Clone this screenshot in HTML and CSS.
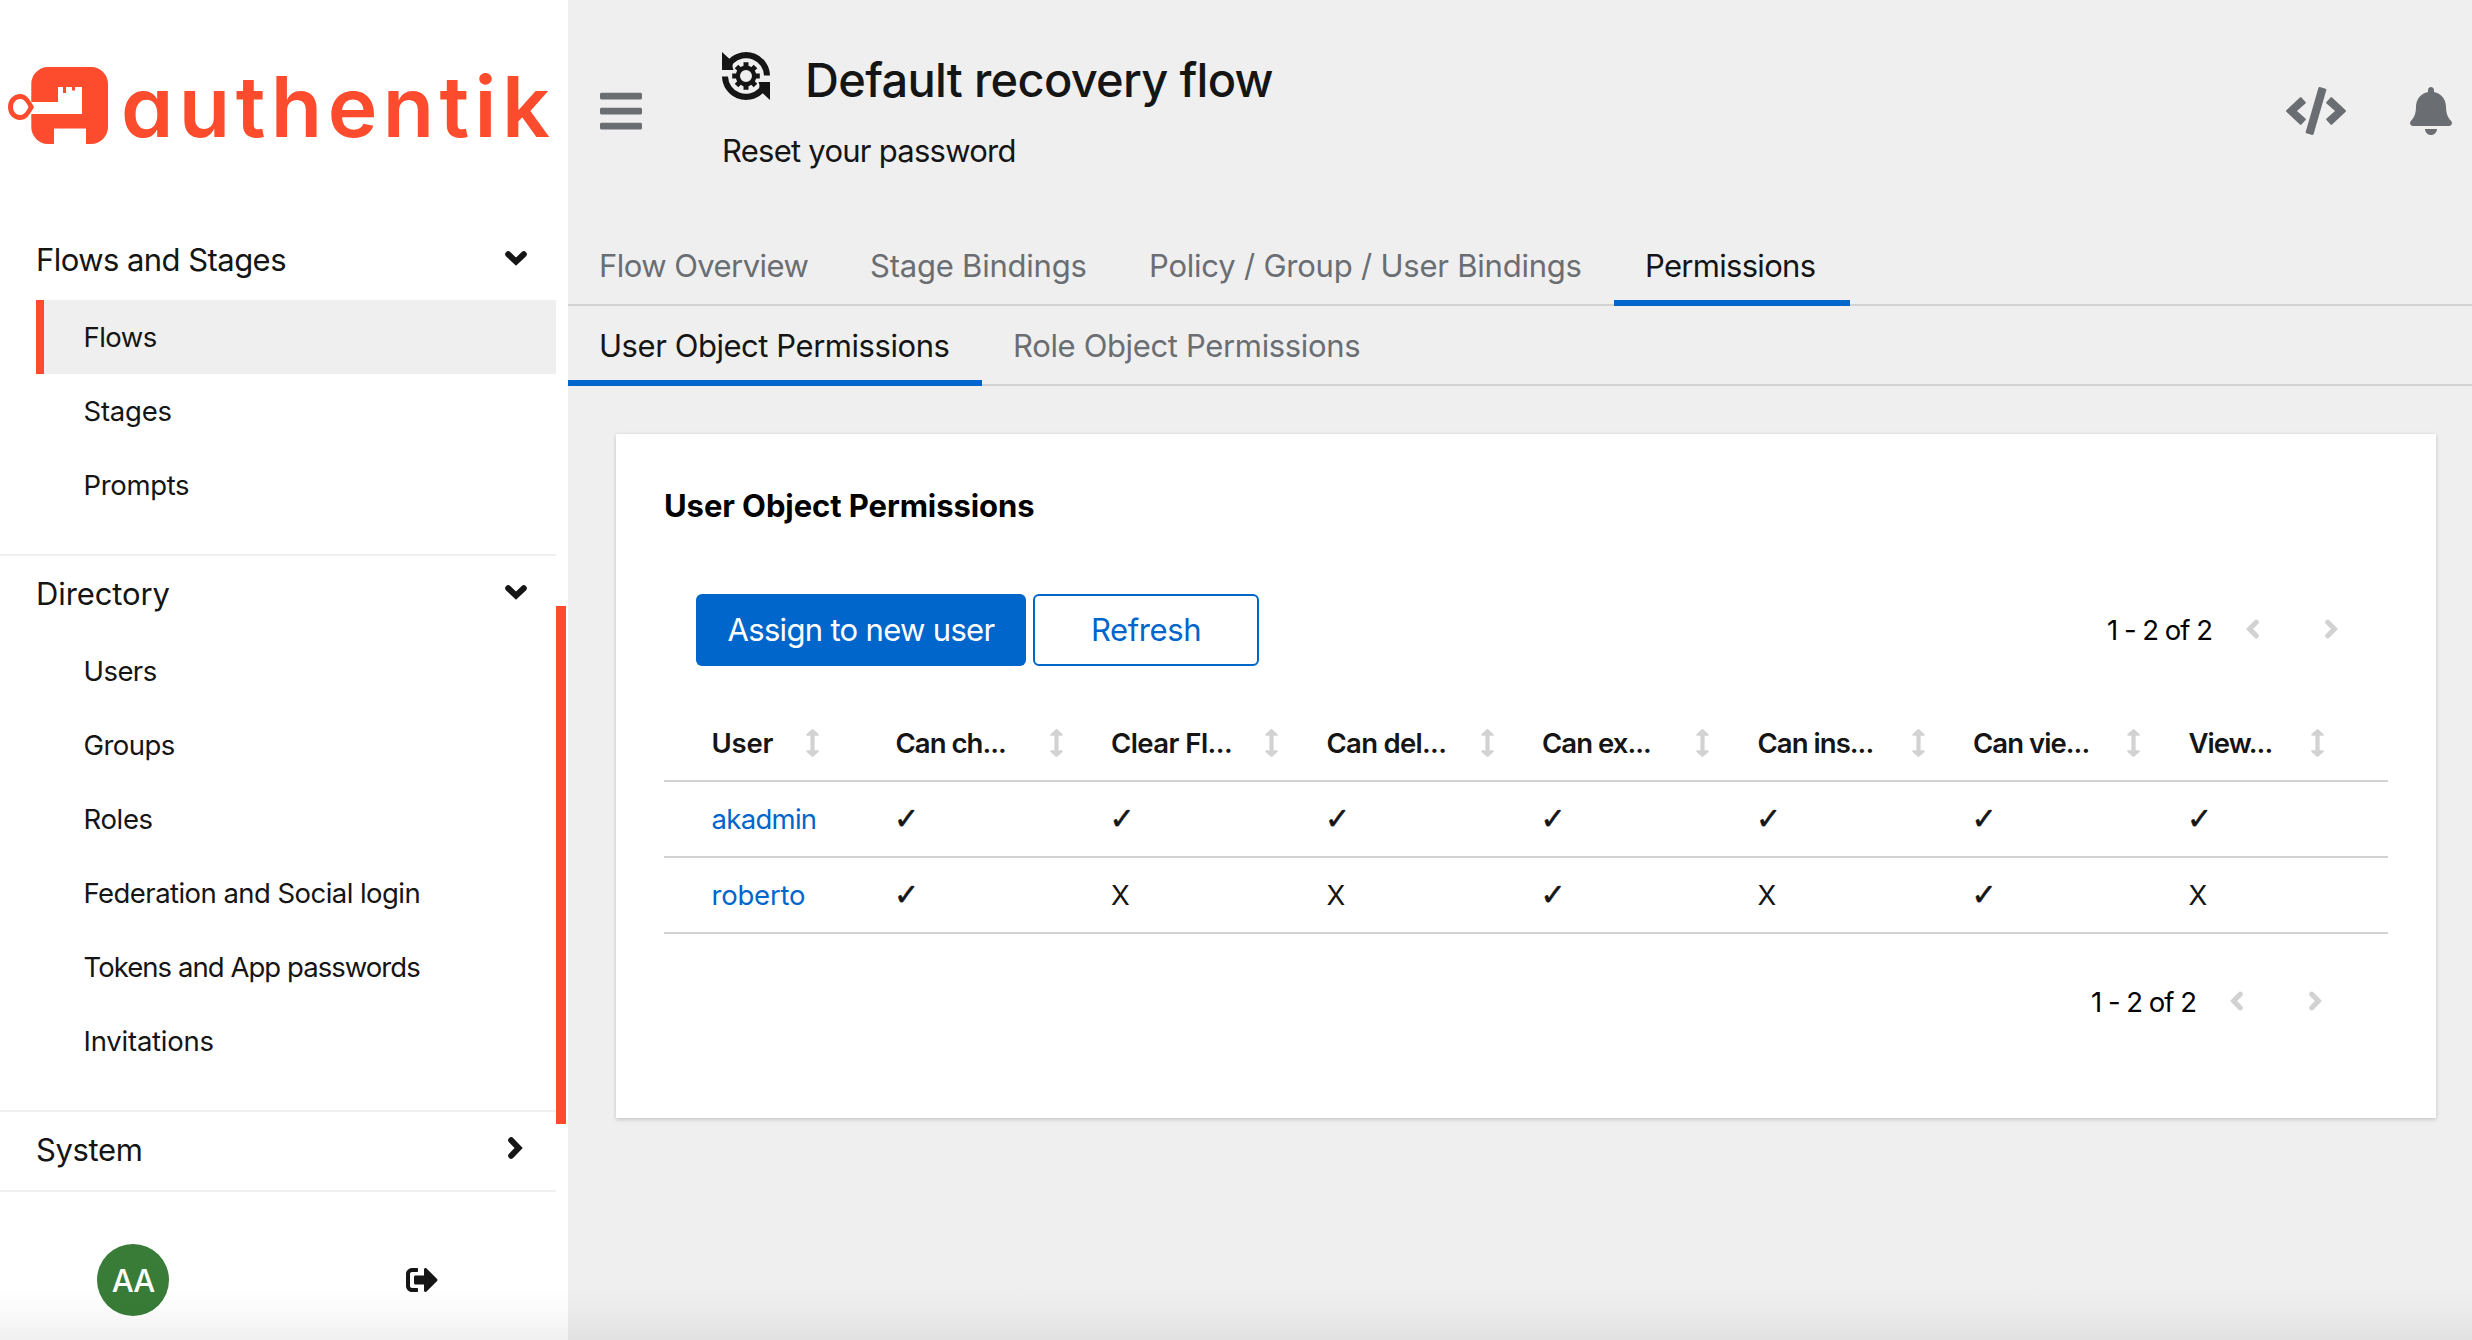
FILE: index.html
```
<!DOCTYPE html>
<html lang="en">
<head>
<meta charset="utf-8">
<title>Default recovery flow - authentik</title>
<link rel="stylesheet" href="styles.css">
</head>
<body>
<svg class="defs" width="0" height="0">
  <symbol id="chev-down" viewBox="0 0 22 15"><path d="M3.200 3.200L11 10.600L18.800 3.200" fill="none" stroke="currentColor" stroke-width="6" stroke-linecap="round"/></symbol>
  <symbol id="chev-right" viewBox="0 0 15 22"><path d="M3.200 3.200L10.600 11L3.200 18.800" fill="none" stroke="currentColor" stroke-width="6" stroke-linecap="round"/></symbol>
  <symbol id="angle-right" viewBox="0 0 13 20"><path d="M2.800 3.200L9.400 10L2.800 16.800" fill="none" stroke="currentColor" stroke-width="5.200" stroke-linecap="round"/></symbol>
  <symbol id="angle-left" viewBox="0 0 13 20"><path d="M10.200 3.200L3.600 10L10.200 16.800" fill="none" stroke="currentColor" stroke-width="5.200" stroke-linecap="round"/></symbol>
  <symbol id="sort" viewBox="0 0 13 28"><path d="M5.600.4q.9-.7 1.800 0l5 4.600q1 1.600-.6 1.800H8.600v14.400h3.200q1.600.2.600 1.800l-5 4.600q-.9.7-1.800 0l-5-4.600q-1-1.600.6-1.800h3.200V6.800H1.200Q-.4 6.600.6 5z"/></symbol>
</svg>
<div class="page">
  <aside class="sidebar">
    <div class="brand">
      <svg class="brand-mark" width="100" height="77" viewBox="0 0 100 77">
        <path fill="#fd4b2d" fill-rule="evenodd" d="M40 0H83A17 17 0 0 1 100 17V60A17 17 0 0 1 83 77H78V61.500H46V77H40A17 17 0 0 1 23.300 60V47H74V20H67V23.500H64V20H58V26H55V20H50V35H23.300V17A17 17 0 0 1 40 0zM12 27C18 27 21 31 26 40C21 49 18 53 12 53C5.500 53 0 47.500 0 40S5.500 27 12 27zM12.300 32C8.200 32 5 35.500 5 40S8.200 48 12.300 48C15.500 48 18 45.500 20.500 40C18 34.500 15.500 32 12.300 32z"/>
      </svg>
      <span class="brand-name">authentik</span>
    </div>
    <nav class="nav">
      <section class="group">
        <div class="group-head"><span>Flows and Stages</span><svg class="ic" width="22" height="15"><use href="#chev-down"/></svg></div>
        <a class="item current">Flows</a>
        <a class="item t2">Stages</a>
        <a class="item t3">Prompts</a>
      </section>
      <section class="group">
        <div class="group-head t1"><span>Directory</span><svg class="ic" width="22" height="15"><use href="#chev-down"/></svg></div>
        <a class="item">Users</a>
        <a class="item">Groups</a>
        <a class="item t3">Roles</a>
        <a class="item">Federation and Social login</a>
        <a class="item t9">Tokens and App passwords</a>
        <a class="item t2">Invitations</a>
      </section>
      <section class="group closed">
        <div class="group-head t3"><span>System</span><svg class="ic right" width="15" height="22"><use href="#chev-right"/></svg></div>
      </section>
    </nav>
    <div class="user">
      <span class="avatar">AA</span>
      <svg width="32" height="32" viewBox="0 0 512 512"><path d="M497 273L329 441c-15 15-41 4.500-41-17v-96H152c-13.300 0-24-10.700-24-24v-96c0-13.300 10.700-24 24-24h136V88c0-21.400 25.900-32 41-17l168 168c9.300 9.400 9.300 24.600 0 34zM192 436v-40c0-6.600-5.400-12-12-12H96c-17.700 0-32-14.300-32-32V160c0-17.700 14.300-32 32-32h84c6.600 0 12-5.400 12-12V76c0-6.600-5.400-12-12-12H96c-53 0-96 43-96 96v192c0 53 43 96 96 96h84c6.600 0 12-5.400 12-12z"/></svg>
    </div>
    <div class="thumb"></div>
  </aside>
  <main class="main">
    <header class="header">
      <svg class="menu" width="42" height="48" viewBox="0 0 448 512"><path d="M16 132h416c8.837 0 16-7.163 16-16V76c0-8.837-7.163-16-16-16H16C7.163 60 0 67.163 0 76v40c0 8.837 7.163 16 16 16zm0 160h416c8.837 0 16-7.163 16-16v-40c0-8.837-7.163-16-16-16H16c-8.837 0-16 7.163-16 16v40c0 8.837 7.163 16 16 16zm0 160h416c8.837 0 16-7.163 16-16v-40c0-8.837-7.163-16-16-16H16c-8.837 0-16 7.163-16 16v40c0 8.837 7.163 16 16 16z"/></svg>
      <div class="heading">
        <div class="title-row">
          <svg class="flow-icon" width="48" height="48" viewBox="0 0 48 48">
            <g id="cycle"><path d="M0 0L7.300 6.800A24 24 0 0 1 48 23.500H42A18 18 0 0 0 11.500 11.200Q9.500 13.500 11.500 18H0z"/></g>
            <use href="#cycle" transform="rotate(180 24 24)"/>
            <circle cx="24" cy="24" r="8.200" fill="none" stroke="#151515" stroke-width="4.400"/>
            <path d="M24 10.200V15M24 33V37.800M10.200 24H15M33 24H37.800M14.500 14.500L17.800 17.800M30.200 30.200L33.500 33.500M14.500 33.500L17.800 30.200M30.200 17.800L33.500 14.500" stroke="#151515" stroke-width="5"/>
          </svg>
          <h1>Default recovery flow</h1>
        </div>
        <p class="subtitle">Reset your password</p>
      </div>
      <div class="tools">
        <svg width="60" height="48" viewBox="0 0 640 512"><path d="M278.900 511.500l-61-17.700c-6.400-1.800-10-8.500-8.200-14.900L346.200 8.700c1.800-6.400 8.500-10 14.900-8.200l61 17.700c6.400 1.800 10 8.500 8.200 14.900L293.800 503.300c-1.900 6.400-8.500 10.100-14.900 8.200zm-114-112.200l43.500-46.400c4.600-4.900 4.300-12.700-.8-17.200L117 256l90.600-79.700c5.100-4.500 5.500-12.300.8-17.200l-43.500-46.400c-4.500-4.800-12.100-5.100-17-.5L3.800 247.200c-5.100 4.700-5.100 12.800 0 17.500l144.100 135.100c4.900 4.600 12.500 4.400 17-.5zm327.200.6l144.100-135.100c5.100-4.700 5.100-12.800 0-17.500L492.100 112.100c-4.800-4.500-12.400-4.300-17 .5L431.600 159c-4.600 4.900-4.300 12.700.8 17.200L523 256l-90.600 79.700c-5.100 4.500-5.500 12.300-.8 17.200l43.500 46.400c4.500 4.900 12.100 5.100 17 .6z"/></svg>
        <svg width="42" height="48" viewBox="0 0 448 512"><path d="M224 512c35.320 0 63.970-28.650 63.970-64H160.030c0 35.350 28.650 64 63.970 64zm215.390-149.710c-19.320-20.760-55.470-51.990-55.470-154.290 0-77.700-54.480-139.900-127.940-155.160V32c0-17.670-14.320-32-31.980-32s-31.980 14.330-31.980 32v20.840C118.560 68.100 64.080 130.300 64.080 208c0 102.300-36.150 133.530-55.470 154.290-6 6.450-8.660 14.160-8.610 21.710.11 16.400 12.980 32 32.100 32h383.800c19.120 0 32-15.600 32.100-32 .05-7.550-2.610-15.270-8.610-21.710z"/></svg>
      </div>
    </header>
    <div class="tabs primary-tabs">
      <a class="tab">Flow Overview</a><a class="tab t2">Stage Bindings</a><a class="tab t2">Policy / Group / User Bindings</a><a class="tab active t7">Permissions</a>
    </div>
    <div class="tabs object-tabs">
      <a class="tab active t4">User Object Permissions</a><a class="tab t3">Role Object Permissions</a>
    </div>
    <section class="card">
      <h2>User Object Permissions</h2>
      <div class="toolbar">
        <button class="btn primary">Assign to new user</button>
        <button class="btn secondary">Refresh</button>
        <div class="pager"><span>1 - 2 of 2</span><svg width="13" height="20"><use href="#angle-left"/></svg><svg width="13" height="20"><use href="#angle-right"/></svg></div>
      </div>
      <div class="table">
        <div class="row head">
          <div class="cell"><span class="t2">User</span><svg width="13" height="28"><use href="#sort"/></svg></div>
          <div class="cell"><span class="t9">Can ch...</span><svg width="13" height="28"><use href="#sort"/></svg></div>
          <div class="cell"><span>Clear Fl...</span><svg width="13" height="28"><use href="#sort"/></svg></div>
          <div class="cell"><span class="t7">Can del...</span><svg width="13" height="28"><use href="#sort"/></svg></div>
          <div class="cell"><span class="t9">Can ex...</span><svg width="13" height="28"><use href="#sort"/></svg></div>
          <div class="cell"><span class="t9">Can ins...</span><svg width="13" height="28"><use href="#sort"/></svg></div>
          <div class="cell"><span class="t9">Can vie...</span><svg width="13" height="28"><use href="#sort"/></svg></div>
          <div class="cell"><span class="t9">View...</span><svg width="13" height="28"><use href="#sort"/></svg></div>
        </div>
        <div class="row">
          <div class="cell"><a class="link t7">akadmin</a></div>
          <div class="cell yes">✓</div><div class="cell yes">✓</div><div class="cell yes">✓</div><div class="cell yes">✓</div><div class="cell yes">✓</div><div class="cell yes">✓</div><div class="cell yes">✓</div>
        </div>
        <div class="row">
          <div class="cell"><a class="link t2">roberto</a></div>
          <div class="cell yes">✓</div><div class="cell">X</div><div class="cell">X</div><div class="cell yes">✓</div><div class="cell">X</div><div class="cell yes">✓</div><div class="cell">X</div>
        </div>
      </div>
      <div class="pager bottom"><span>1 - 2 of 2</span><svg width="13" height="20"><use href="#angle-left"/></svg><svg width="13" height="20"><use href="#angle-right"/></svg></div>
    </section>
  </main>
  <div class="shade"></div>
</div>
</body>
</html>
```
FILE: styles.css
```
* { box-sizing: border-box; }
body {
  margin: 0;
  font-family: Inter, "Liberation Sans", sans-serif;
  font-size: 27.5px;
  letter-spacing: -.55px;
  color: #151515;
  background: #efefef;
}
svg { display: block; flex: none; fill: currentColor; }
.defs { position: absolute; }
.page { position: relative; display: flex; width: 2472px; height: 1340px; overflow: hidden; }

/* letter-spacing steps */
.t1 { letter-spacing: -.1px; }
.t2 { letter-spacing: -.22px; }
.t3 { letter-spacing: -.35px; }
.t4 { letter-spacing: -.45px; }
.t7 { letter-spacing: -.7px; }
.t9 { letter-spacing: -.95px; }

/* Sidebar */
.sidebar { position: relative; flex: none; width: 568px; background: #fff; display: flex; flex-direction: column; }
.brand { height: 222px; padding: 0 0 11px 8px; display: flex; align-items: center; color: #fd4b2d; }
.brand-name {
  margin: 2px 0 0 13px;
  font-size: 84px;
  font-weight: 600;
  line-height: 84px;
  letter-spacing: 5.4px;
  font-feature-settings: "cv11";
}
.nav { width: 556px; }
.group { padding-bottom: 32px; border-bottom: 2px solid #f0f0f0; }
.group.closed { padding-bottom: 0; }
.group-head {
  height: 78px;
  padding: 0 28px 3px 36px;
  display: flex;
  align-items: center;
  justify-content: space-between;
  font-size: 31px;
}
.group-head span { letter-spacing: inherit; }
.group-head .ic { margin: -3px 1px 0 0; }
.group-head .ic.right { margin: -4px 5px 0 0; }
.item { display: flex; align-items: center; height: 74px; margin-left: 36px; padding-left: 47.5px; }
.item.current { background: #efefef; border-left: 8px solid #fd4b2d; padding-left: 39.5px; }
.user {
  height: 122px;
  margin-top: auto;
  padding: 26px 130px 0 97px;
  display: flex;
  align-items: flex-start;
  justify-content: space-between;
}
.user svg { margin-top: 20px; }
.avatar {
  width: 72px; height: 72px; border-radius: 50%;
  background: #387c37; color: #fff;
  display: flex; align-items: center; justify-content: center;
  font-size: 31px; font-weight: 500; letter-spacing: -1px;
}
.thumb { position: absolute; left: 556px; top: 606px; width: 10px; height: 518px; background: #fd4b2d; }

/* Header */
.main { flex: 1; min-width: 0; }
.header { height: 226px; padding: 0 20px 0 32px; display: flex; }
.menu { margin-top: 87px; color: #6a6e73; }
.heading { margin-left: 80px; padding-top: 50px; }
.title-row { display: flex; align-items: flex-start; gap: 35px; height: 70px; }
.flow-icon { margin-top: 2px; }
h1 { margin: 0; font-size: 47px; line-height: 60px; font-weight: 500; letter-spacing: -.7px; }
.subtitle { margin: 11px 0 0; font-size: 31px; line-height: 40px; letter-spacing: -.75px; }
.tools { display: flex; gap: 64px; margin: 87px 0 0 auto; color: #6a6e73; }

/* Tabs */
.tabs { display: grid; height: 80px; box-shadow: inset 0 -2px #d2d2d2; font-size: 31px; color: #6a6e73; }
.primary-tabs { grid-template-columns: 271px 279px 496px 236px; }
.object-tabs { grid-template-columns: 414px 410px; }
.tab { display: flex; align-items: center; padding: 0 0 2px 31px; white-space: nowrap; }
.tab.active { color: #151515; box-shadow: inset 0 -6px #06c; }

/* Card */
.card { height: 684px; margin: 48px 36px 0 48px; padding: 0 48px; background: #fff; box-shadow: 0 2px 4px rgba(3,3,3,.13), 0 0 4px rgba(3,3,3,.07); }
h2 { margin: 0; padding-top: 52px; height: 160px; font-size: 31px; line-height: 40px; font-weight: 700; letter-spacing: -.08px; color: #000; }
.toolbar { display: flex; height: 72px; padding: 0 50px 0 32px; }
.btn { border: 0; border-radius: 6px; padding: 0 0 2px; font: inherit; font-size: 31px; letter-spacing: -.68px; }
.primary { width: 330px; background: #06c; color: #fff; }
.secondary { width: 226px; margin-left: 7px; background: #fff; color: #06c; border: 2px solid #06c; letter-spacing: -.4px; }
.pager { display: flex; align-items: center; margin-left: auto; letter-spacing: -1px; color: #000; }
.pager span { margin-right: 34px; }
.pager svg { color: #d2d2d2; margin-top: -2px; }
.pager svg + svg { margin-left: 66px; }
.pager.bottom { justify-content: flex-end; height: 72px; margin-top: 32px; padding-right: 66px; }

/* Table */
.table { margin-top: 40px; }
.row { display: grid; grid-template-columns: 216px repeat(6, 215.5px) 215px; height: 76px; border-bottom: 2px solid #d2d2d2; }
.cell { display: flex; align-items: center; padding-left: 15.5px; }
.cell:first-child { padding-left: 47.5px; }
.head { font-weight: 600; }
.head span { width: 154px; white-space: nowrap; }
.head .cell:first-child span { width: 94.5px; }
.head .cell:last-child span { width: 122.5px; }
.head svg { color: #d2d2d2; margin-top: -1px; }
.yes { padding: 0 0 2px 14px; font-family: "DejaVu Sans", sans-serif; font-size: 30px; -webkit-text-stroke: .6px #151515; }
.link { color: #06c; }

/* Soft shadow along the bottom edge of the window */
.shade { position: absolute; left: 0; right: 0; bottom: 0; height: 56px; background: linear-gradient(rgba(0,0,0,0), rgba(0,0,0,.015) 45%, rgba(0,0,0,.06)); }
```
